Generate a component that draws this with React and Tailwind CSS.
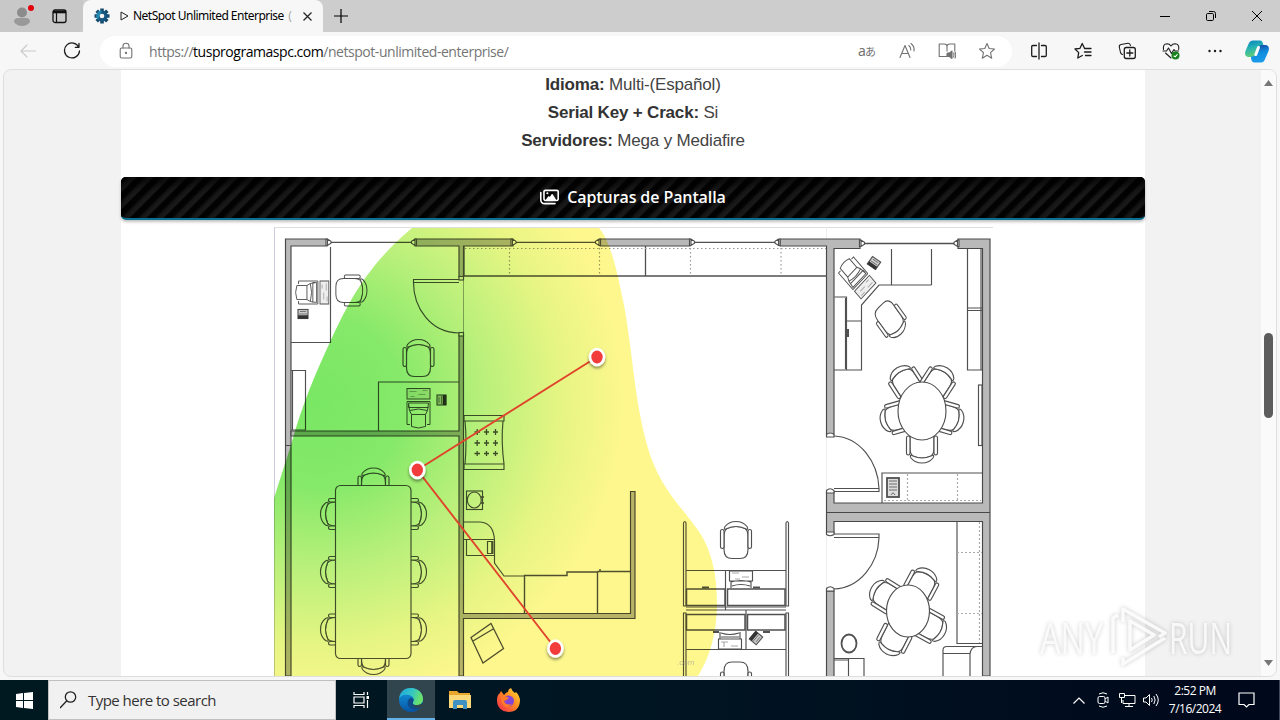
import { FaRegImages } from 'react-icons/fa6'

const UI_FONT = "font-['Open_Sans','Noto_Sans',sans-serif]"

// Office chair, backrest pointing up at rot=0
function Chair({ x, y, rot = 0, sx = 1 }) {
  return (
    <g transform={`translate(${x} ${y}) scale(${sx} 1) rotate(${rot})`} fill="#fff">
      <path d="M-9-12Q-12-10-12-4V9Q-12 18-4 18H4Q12 18 12 9V-4Q12-10 9-12Q0-16-9-12Z" />
      <path d="M-11-14Q-7-19 0-19Q7-19 11-14Q13-10 9-12Q0-16-9-12Q-13-10-11-14Z" />
      <rect x="-15.5" y="-11" width="3.5" height="19" rx="1.7" />
      <rect x="12" y="-11" width="3.5" height="19" rx="1.7" />
    </g>
  )
}

function Laptop({ x, y, rot = 0, sx = 1 }) {
  return (
    <g transform={`translate(${x} ${y}) scale(${sx} 1) rotate(${rot})`} fill="none" strokeWidth="1">
      <rect x="-11.5" y="-20" width="23" height="10.5" fill="#eee" />
      <path d="M-9-17H-2M0-14H7M4-18H9M-8-12H-4" stroke="#aaa" />
      <path d="M-11.5-7H11.5V16H8.5M-11.5-7V16H-8.5" />
      <path d="M-10-5.5H10L9 2Q0-1-9 2ZM-9 2L-7 6V18Q0 21 7 18V6L9 2M-7 6H7M-10-4V-1H10" />
    </g>
  )
}

function Phone({ x, y, rot = 0 }) {
  return (
    <g transform={`translate(${x} ${y}) rotate(${rot})`}>
      <rect x="-5" y="-4.5" width="10" height="9" fill="#ccc" />
      <path d="M-5 3H5" strokeWidth="3.5" stroke="#333" />
      <path d="M-4 0H4M-3-2.5H3" strokeWidth="0.7" />
    </g>
  )
}

function WindowEnd({ x, y = 242.3, flip }) {
  return (
    <path
      transform={`translate(${x} ${y}) scale(${flip ? -1 : 1} 1)`}
      d="M-2.5-3.2H-1L2.5-1V1L-1 3.2H-2.500ZM-1-3V3"
      fill="#fff"
    />
  )
}

const PINS = [[597, 357], [417.3, 470], [555.4, 648.5]]

function FloorPlan() {
  return (
    <svg width="719" height="449" viewBox="274 227 719 449" className="block isolate">
      <defs>
        <radialGradient id="heat" gradientUnits="userSpaceOnUse" cx="318" cy="402" r="305">
          <stop offset="0" stopColor="#79e764" />
          <stop offset="0.28" stopColor="#86e969" />
          <stop offset="0.55" stopColor="#baf07b" />
          <stop offset="0.8" stopColor="#e6f583" />
          <stop offset="1" stopColor="#fdf78e" />
        </radialGradient>
        <filter id="pinShadow" x="-50%" y="-50%" width="200%" height="200%">
          <feDropShadow dx="0" dy="2" stdDeviation="1.8" floodOpacity="0.45" />
        </filter>
      </defs>
      <rect x="274" y="227" width="719" height="449" fill="#fff" />
      <path d="M274 227.5H993" stroke="#dedede" />
      <path d="M274.5 227V676" stroke="#ccd" />
      <path d="M826.5 227V676" stroke="#eee" />

      <g stroke="#505050" strokeWidth="1.15" fill="none">
        {/* walls */}
        <g fill="#b9b9b9" stroke="#484848">
          <path d="M285.5 239H327V246H291V676H285.5Z" />
          <path d="M415 239H513V246H463.5V277H459V246H415Z" />
          <path d="M600 239H690V246H600ZM780 239H860V248.5H834V434H826.5V246H780Z" />
          <path d="M958 239H990V676H982.5V521.5H834V533H826.5V492H834V503H982.5V248.5H958Z" />
          <path d="M826.5 512.5H990M285.5 445.5H291" />
          <path d="M459 335H463.5V613.5H630.5V491.5H635V618.5H463.5V676H459V436H291V431H459Z" />
          <rect x="826.5" y="591" width="7.5" height="86" />
        </g>
        <g fill="#fff">
          <rect x="459" y="276.5" width="4.5" height="3.5" />
          <rect x="459" y="332.5" width="4.5" height="3.5" />
          <path d="M826.5 437V434.5Q830 431.5 834 434.5V437ZM826.5 493V490.5Q830 487 834 490.5V493ZM826.5 532V534.5Q830 537 834 534.5V532ZM826.5 591V588.5Q830 585 834 588.5V591Z" />
        </g>

        {/* windows */}
        <path d="M329 242.3H414M515 242.3H598M692 242.3H778M862 243.5H957" strokeWidth="1.3" />
        <WindowEnd x={328.5} /><WindowEnd x={414} flip />
        <WindowEnd x={513.5} /><WindowEnd x={598} flip />
        <WindowEnd x={692} /><WindowEnd x={777.5} flip />
        <WindowEnd x={862} y={243.3} /><WindowEnd x={956.5} y={243.3} flip />

        {/* doors */}
        <path d="M459 279.5H413.5V282.5H459M413.5 282.5C413.5 307 430 333 459 333" />
        <path d="M463.5 280V332" strokeWidth="0.5" />
        <path d="M834 488.5H879V491.5H834M879 488.5C878 462 860 437 834 436" />
        <path d="M834 534H879V537.5H834M879 538C878 564 860 588 834 589" />

        {/* top left office */}
        <path d="M330.5 247V342.5H291M291 370.5H305.5V430H291M292.5 370V430" />
        <path d="M378.5 431V382H459" />
        <Laptop x={312} y={292.5} rot={90} sx={0.84} />
        <Phone x={303} y={314} />
        <Chair x={351} y={290.5} rot={90} sx={0.84} />
        <Chair x={418.5} y={358.5} />
        <Laptop x={418.5} y={408.5} />
        <Phone x={441.5} y={400} rot={-90} />

        {/* counter along the top */}
        <path d="M463.5 276H826.5M645.5 246V276M464 246V276" strokeWidth="1.3" />
        <path d="M465 248.5H826M509.5 248V276M599.5 248V276M690.5 248V276M781 248V276" stroke="#999" strokeDasharray="1.5 2.5" />

        {/* meeting table */}
        <Chair x={373.5} y={487} />
        <Chair x={373.5} y={655.5} rot={180} />
        {[514, 572, 629.5].map(y => (
          <g key={y}>
            <Chair x={339.5} y={y} rot={-90} />
            <Chair x={407.5} y={y} rot={90} />
          </g>
        ))}
        <rect x="335.5" y="485.5" width="75.5" height="173" rx="5" fill="#fff" />

        {/* lounge and kitchen */}
        <path d="M464 415.5H504V421H464ZM464 464H504V469.5H464ZM465 421Q467 442 465 464M503 421Q501 442 504 464" />
        <path d="M474.5 432H480M484 432H489M493 432H498M474.5 443H480M484 443H489M493 443H498M474.5 453.5H480M484 453.5H489M493 453.5H498M477.2 429V435M486.5 429V435M495.5 429V435M477.2 440V446M486.5 440V446M495.5 440V446M477.2 451V456M486.5 451V456M495.5 451V456" strokeWidth="1.3" />
        <rect x="466.5" y="491" width="16" height="18.5" />
        <ellipse cx="474.3" cy="500" rx="7" ry="8" />
        <path d="M482.5 496V498M482.5 502V504" strokeWidth="2.5" />
        <path d="M464 522H480Q494 523 494.5 541V563L504 576H524M464 539.5H494M466.5 539.5V555.5H494M487.5 541.5H492V553.5H487.5Z" />
        <path d="M492.5 541V554" strokeWidth="2" />
        <path d="M524.5 613V575.5H567V572H597.5V613M597.5 571.5H630M600 569V571" strokeWidth="1.4" />
        <path d="M471 637.5L491 623.5L503.5 648.5L483 663ZM473 641L494 628.5" strokeWidth="1.3" />

        {/* cubicles */}
        <path d="M683.5 606V523Q684.8 520 686 523V606ZM786 606V523Q787.2 520 788.5 523V606ZM683.5 676V613H686V676M786 676V613H788.5V676" />
        <path d="M686 570.5H786M725.5 570V610M686 607H786M686 610H786M746 610V650M686 649.5H786" />
        <path d="M686.5 589H725V605.5H686.5ZM727.5 589H785V605.5H727.5ZM686.5 614.5H745V630H686.5ZM747.5 614.5H785V630H747.5Z" strokeWidth="1.5" />
        <path d="M702 587.5H709M753 587.5H760M713 632H719M763 632H770" strokeWidth="2" />
        <path d="M729.5 571H752.5V581H729.5ZM731 581V588M751 581V588M731 582Q741 579 751 582M732 586Q741 583 750 586M718.5 639H741.5V649H718.5ZM720 632V639M740 632V639M721 633Q730 636 739 633M721 637H739" />
        <path d="M732 573H739M742 577H749M735 579H740M721 642H728M731 646H738M724 647V642" stroke="#aaa" />
        <Phone x={756} y={638} rot={130} />
        <Chair x={736} y={540.5} />
        <Chair x={736} y={680} rot={180} />

        {/* top right office */}
        <path d="M891.5 249V285M931.5 249V285M931.5 285H879L861.5 305V370H834M846.5 321H861.5M834.5 297H846.5V370M845.5 298V369" />
        <path d="M848 329V337" strokeWidth="2" />
        <path d="M967.5 248.5V370H982M967.5 308H982M967.5 310.5H982M981 249V370" strokeWidth="1.2" />
        <rect x="978.5" y="385" width="3.5" height="60.5" />
        <Laptop x={856} y={276.5} rot={136} sx={0.9} />
        <Phone x={874} y={263} rot={35} />
        <Chair x={890.5} y={319.5} rot={140} sx={0.86} />
        <Chair x={922} y={444} rot={180} />
        <Chair x={945} y={417} rot={106} />
        <Chair x={899} y={417} rot={-106} />
        <Chair x={907} y={384} rot={-33} />
        <Chair x={937} y={384} rot={33} />
        <ellipse cx="922" cy="411" rx="24" ry="29" fill="#fff" />
        <path d="M882 503V473H982" />
        <path d="M907.5 474V502M957.5 474V502M884 500.5H981" stroke="#aaa" strokeDasharray="2 2" />
        <rect x="887" y="478" width="12" height="19" fill="#ddd" strokeWidth="1.8" />
        <path d="M889 481H897M889 484H897M889 487H897M889 490H897M891 495Q893 491 895 495" strokeWidth="0.8" />

        {/* bottom right office */}
        <Chair x={920.5} y={586.5} rot={28} />
        <Chair x={928} y={625} rot={119} />
        <Chair x={895} y={637} rot={207} />
        <Chair x={888} y={597} rot={-58} />
        <ellipse cx="908" cy="611" rx="21.5" ry="26" fill="#fff" />
        <path d="M957 522V643.5H982" />
        <path d="M957 552.5H982M957 613.5H982M979.5 522V643" stroke="#aaa" strokeDasharray="2 2" />
        <ellipse cx="849" cy="643.5" rx="7.5" ry="9" strokeWidth="1.8" />
        <path d="M834 658.5H864V676M848.5 658V676M834 660H848" />
        <path d="M943 676V650Q943 646.5 947 646.5H982M943 653.5H970M970 676V654Q971 646.5 977 646.5" />
      </g>

      <path
        d="M274 498L291 445C302 405 316 372 330 342C346 308 364 268 412 228H599C612 242 619 282 624 305C633 355 634 395 646 441C658 488 681 505 700 533C712 552 717 575 717 604C717 632 710 657 698 676H274Z"
        fill="url(#heat)"
        className="mix-blend-multiply"
      />
      <text x="677" y="665" fontSize="8" fill="#999" opacity=".6" fontFamily="Liberation Sans">.com</text>

      <path d="M597 357L417.3 470L555.4 648.5" fill="none" stroke="#e0442c" strokeWidth="1.9" />
      {PINS.map(([x, y]) => (
        <g key={x}>
          <ellipse cx={x} cy={y} rx="8.3" ry="9.3" fill="#fff" filter="url(#pinShadow)" />
          <ellipse cx={x} cy={y} rx="5.7" ry="6.5" fill="#f23c3c" />
        </g>
      ))}
    </svg>
  )
}

function Icon({ size = 18, children, className = '' }) {
  return (
    <svg width={size} height={size} viewBox="0 0 18 18" fill="none" stroke="currentColor" strokeWidth="1.1" strokeLinecap="round" strokeLinejoin="round" className={`block shrink-0 ${className}`}>
      {children}
    </svg>
  )
}

const STAR = 'M9 1.5L11.2 6.5L16.5 7L12.5 10.7L13.7 16.2L9 13.3L4.3 16.2L5.5 10.7L1.5 7L6.8 6.5Z'

function TitleBar() {
  return (
    <div className="flex h-8 shrink-0 bg-[#cdcdcd]">
      <div className="flex w-[83px] shrink-0 items-center rounded-br-md bg-[#c8c8c8] pl-3">
        <svg width="22" height="22" viewBox="0 0 22 22">
          <circle cx="10" cy="7.5" r="5" fill="#8c8c8c" />
          <path d="M2 17Q2 13 6 13H14Q18 13 18 17Q15 21 10 21Q5 21 2 17Z" fill="#999" />
          <circle cx="19" cy="3" r="3" fill="#e8000b" />
        </svg>
        <svg width="15" height="15" viewBox="0 0 15 15" fill="none" stroke="#111" className="ml-[18px]">
          <rect x="1" y="1" width="13" height="12.5" rx="2" strokeWidth="1.3" />
          <path d="M1 3H14" strokeWidth="2.6" />
          <path d="M4.5 4V13" strokeWidth="1.2" />
        </svg>
      </div>
      <div className="flex w-60 shrink-0 items-center rounded-t-lg bg-[#f7f7f7] pl-[11px]">
        <svg width="16" height="16" viewBox="0 0 16 16" className="shrink-0">
          <path d="M8 .5V15.5M.5 8H15.5M2.7 2.7L13.3 13.3M13.3 2.7L2.7 13.3" stroke="#164a6c" strokeWidth="3.6" />
          <circle cx="8" cy="8" r="5.5" fill="#17567e" />
          <path d="M8 2.5A5.5 5.5 0 0 0 4 12Z" fill="#2588af" />
          <circle cx="8" cy="8" r="2.3" fill="#f7f7f7" />
        </svg>
        <svg width="9" height="10" viewBox="0 0 9 10" fill="none" stroke="#222" className="ml-[10px] shrink-0">
          <path d="M1 1L8 5L1 9Z" />
        </svg>
        <div className="ml-[4px] w-[161px] whitespace-nowrap font-['Noto_Sans',sans-serif] text-[12px] leading-4 tracking-[-0.52px] text-black">
          NetSpot Unlimited Enterprise <span className="ml-0.5 text-[#aaa]">(</span>
        </div>
        <svg width="9" height="9" viewBox="0 0 9 9" stroke="#222" strokeWidth="1.2" className="ml-[9px] shrink-0">
          <path d="M.5.5L8.5 8.5M8.5.5L.5 8.5" />
        </svg>
      </div>
      <div className="flex grow items-center rounded-bl-md bg-[#cdcdcd] pl-[11px] text-black">
        <svg width="14" height="14" viewBox="0 0 14 14" stroke="currentColor" strokeWidth="1.2">
          <path d="M7 0V14M0 7H14" />
        </svg>
        <div className="ml-auto flex items-center pr-[18px]">
          <svg width="10" height="10" viewBox="0 0 10 10" stroke="currentColor"><path d="M0 5.5H10" /></svg>
          <svg width="10" height="10" viewBox="0 0 10 10" fill="none" stroke="currentColor" className="ml-9">
            <rect x=".5" y="2.5" width="7" height="7" rx="1.2" />
            <path d="M3 .5H7.5Q9.5.5 9.5 2.5V7" />
          </svg>
          <svg width="10" height="10" viewBox="0 0 10 10" stroke="currentColor" className="ml-9"><path d="M0 0L10 10M10 0L0 10" /></svg>
        </div>
      </div>
    </div>
  )
}

function Toolbar() {
  return (
    <div className="flex h-[37px] shrink-0 items-center bg-[#f7f7f7] pl-[19px] pt-px text-[#1c1c1c]">
      <Icon className="text-[#c9c9c9]"><path d="M8 3L2 9L8 15M2 9H16.5" /></Icon>
      <Icon className="ml-[26px]"><path d="M15.8 5.2A7.500 7.500 0 1 0 16.500 9M16 1.5V5.3H12.300" strokeWidth="1.3" /></Icon>
      <div className="ml-[19px] flex h-[31px] w-[912px] items-center rounded-full bg-white pl-[17px] text-[#727272]">
        <Icon>
          <rect x="3.2" y="6" width="11.6" height="10" rx="1.5" />
          <path d="M6 6V4Q6 1.2 9 1.2Q12 1.2 12 4V6" />
          <circle cx="9" cy="11" r=".6" fill="currentColor" />
        </Icon>
        <div className="ml-[14px] w-[364px] whitespace-nowrap text-[14px] tracking-[-0.46px] text-[#757575]">
          https://<span className="text-black">tusprogramaspc.com</span>/netspot-unlimited-enterprise/
        </div>
        <div className="ml-auto flex items-center gap-[22px] pr-4">
          <span className="w-[18px] whitespace-nowrap font-['Noto_Sans','Noto_Sans_CJK_JP',sans-serif] text-[11px] leading-4 tracking-[-0.8px]"><span className="text-[14px]">a</span>あ</span>
          <Icon>
            <path d="M2 15.5L7 3.5L12 15.5M3.7 11.5H10.3M10.8 3.5Q13 5 12.8 8M13 1.5Q16.8 4.500 16 9" />
          </Icon>
          <Icon>
            <path d="M8.5 14.5H1.2V2H6Q9 2 9 4.5Q9 2 12 2H16.8V9M9 4.5V9M9 11.5V14" />
            <path d="M9.5 11H11.5L14 9V16.5L11.5 14.5H9.5Z" fill="currentColor" />
            <path d="M15.5 11Q16.5 13 15.5 15M17 10Q18.5 13 17 16" />
          </Icon>
          <Icon><path d={STAR} /></Icon>
        </div>
      </div>
      <div className="ml-[18px] flex items-center gap-[26px]">
        <Icon><path d="M9 1V17M6.5 3.5H3Q1.7 3.5 1.7 4.8V13.2Q1.7 14.5 3 14.5H6.5M11.5 3.5H15Q16.3 3.5 16.3 4.8V13.2Q16.3 14.5 15 14.5H11.5" strokeWidth="1.3" /></Icon>
        <Icon><path d="M10.5 6.3L8.2 1.5L6 6.3L1 7L4.7 10.6L3.8 16L8.3 13.5M10.5 6.5H17M10.5 10H17M11.5 13.5H17" strokeWidth="1.3" /></Icon>
        <Icon>
          <path d="M4.5 12.5Q3 12 2.5 10.5L1.3 5Q1 3 3 2.5L10 1.2Q12 1 12.5 3.5" />
          <rect x="6.3" y="5.5" width="11" height="11" rx="2" strokeWidth="1.3" />
          <path d="M11.8 8V14M8.8 11H14.8" strokeWidth="1.3" />
        </Icon>
        <Icon>
          <path d="M1.5 7.5Q.7 2 5 1.8Q7.5 1.8 9 4Q10.5 1.8 13 1.8Q17.5 2 16.7 7.5M3.5 11L9 16M1 9H4.5L6.5 6L9.5 11.5L12 7.5L13 9H16.5" />
          <circle cx="13.5" cy="13.5" r="4" fill="#18831d" stroke="none" />
          <path d="M12 14L13.2 14.8L15.2 12.5" stroke="#fff" />
        </Icon>
        <Icon><g fill="currentColor" stroke="none"><circle cx="3.5" cy="9" r="1.2" /><circle cx="9" cy="9" r="1.2" /><circle cx="14.5" cy="9" r="1.2" /></g></Icon>
      </div>
      <svg width="24" height="23" viewBox="0 0 24 23" className="ml-[21px]">
        <defs>
          <linearGradient id="cpA" x2=".3" y2="1"><stop stopColor="#087fc2" /><stop offset=".5" stopColor="#25b3b4" /><stop offset="1" stopColor="#64ce75" /></linearGradient>
          <linearGradient id="cpB" x2=".2" y2="1"><stop stopColor="#163c9a" /><stop offset=".5" stopColor="#118cdc" /><stop offset="1" stopColor="#1a9bea" /></linearGradient>
        </defs>
        <path d="M8 .5H15Q18 .5 18.5 6Q14 5 13 9L11 14Q10 17 7 17H3Q-1 16 .5 11L3.500 4Q4.800 .5 8 .5Z" fill="url(#cpA)" />
        <path d="M16 22.500H9Q6 22 6 16.500Q10 17 11 13L13 8Q14 5 17 5H21Q25 6 23.500 11L20.500 18Q19 22.500 16 22.500Z" fill="url(#cpB)" />
        <path d="M13.500 7.500L10.800 14.500" stroke="#fff" strokeWidth="3" strokeLinecap="round" />
      </svg>
    </div>
  )
}

function Watermark() {
  return (
    <svg width="216" height="68" viewBox="0 0 216 68" className="pointer-events-none absolute bottom-1 right-[25px] drop-shadow-[0_0_2px_rgba(0,0,0,0.25)]">
      <g fontFamily="'Open Sans', sans-serif" fontSize="43" fill="#fff" fillOpacity=".8">
        <text x="5" y="50" textLength="63" lengthAdjust="spacingAndGlyphs">ANY</text>
        <text x="134" y="50" textLength="63" lengthAdjust="spacingAndGlyphs">RUN</text>
      </g>
      <g fill="none" stroke="#fff" strokeOpacity=".85" strokeWidth="3.5" strokeLinejoin="round">
        <path d="M88 18V5L130 29L124 33M88 54V60L130 34" />
        <path d="M95 17V46L119 31Z" />
        <path d="M78 49V14L83 11" />
      </g>
    </svg>
  )
}

function PageView() {
  return (
    <div className="relative mx-[3px] flex h-[608px] shrink-0 overflow-hidden rounded-lg border border-[#dedede] bg-[#f2f2f2]">
      <div className="ml-[117px] flex w-[1024px] shrink-0 flex-col items-center bg-white">
        <div className="h-[107px] w-full pt-px text-center font-['Liberation_Sans',Arial,sans-serif] text-[17px] leading-7 tracking-[-0.18px] text-[#444]">
          <p><b className="text-[#333]">Idioma:</b> Multi-(Español)</p>
          <p><b className="text-[#333]">Serial Key + Crack:</b> Si</p>
          <p><b className="text-[#333]">Servidores:</b> Mega y Mediafire</p>
        </div>
        <div className="flex h-[43px] w-full shrink-0 items-center justify-center rounded-[5px] border-b-2 border-[#087192] bg-[#080808] bg-[repeating-linear-gradient(135deg,#020202_0,#020202_4px,#161616_7px,#1a1a1a_10px,#020202_12px)] pb-px text-white shadow-[0_2px_3px_rgba(0,0,0,0.25),inset_0_8px_8px_rgba(0,0,0,0.5)]">
          <FaRegImages className="mr-2 h-[18px] w-[19px]" />
          <span className="text-[16px] font-semibold tracking-[-0.1px]">Capturas de Pantalla</span>
        </div>
        <div className="mt-[7px] w-[719px]"><FloorPlan /></div>
      </div>
      <div className="ml-auto flex w-[15px] flex-col items-center bg-[#fafafa] py-[10px]">
        <svg width="9" height="6" viewBox="0 0 9 6"><path d="M4.5 0L9 6H0Z" fill="#777" /></svg>
        <div className="mt-[247px] h-[85px] w-[9px] rounded-full bg-[#5c5c5c]" />
        <svg width="9" height="6" viewBox="0 0 9 6" className="mt-auto"><path d="M0 0H9L4.5 6Z" fill="#777" /></svg>
      </div>
      <Watermark />
    </div>
  )
}

function Taskbar() {
  return (
    <div className="mt-auto flex h-10 shrink-0 items-center bg-linear-to-r from-[#001820] via-[#001522] to-[#00081b] text-white">
      <div className="flex w-12 justify-center">
        <svg width="17" height="17" viewBox="0 0 17 17" fill="#fff">
          <path d="M0 2L7 1V8H0ZM8 .9L17 0V8H8ZM0 9H7V16L0 15ZM8 9H17V17L8 16Z" />
        </svg>
      </div>
      <div className="flex h-full w-72 items-center border border-[#c0c0c0] bg-[#f1f1f1] pl-[11px]">
        <svg width="17" height="18" viewBox="0 0 17 18" fill="none" stroke="#222" strokeWidth="1.3">
          <circle cx="10.5" cy="6" r="5.2" /><path d="M6.8 9.8L0 17" />
        </svg>
        <span className="ml-[11px] text-[15px] tracking-[-0.53px] text-[#333]">Type here to search</span>
      </div>
      <div className="flex w-[50px] justify-center">
        <svg width="17" height="16" viewBox="0 0 17 16" fill="none" stroke="#fff" strokeWidth="1.2">
          <path d="M1 0V2.5H11V0M1 16V13.5H11V16M1 5H11V11H1ZM14.5 0V3M14.5 8V16" />
          <rect x="13.5" y="4" width="2.5" height="3" fill="#fff" stroke="none" />
        </svg>
      </div>
      <div className="ml-px flex h-full w-12 items-center justify-center border-b-2 border-[#65b2e8] bg-[#31454e] pt-0.5">
        <svg width="24" height="24" viewBox="0 0 24 24">
          <defs>
            <linearGradient id="edgeTop" y2=".3"><stop stopColor="#20a4de" /><stop offset=".55" stopColor="#32c5c5" /><stop offset="1" stopColor="#6be16d" /></linearGradient>
            <linearGradient id="edgeLow" x2="0" y2="1"><stop stopColor="#149bdf" /><stop offset="1" stopColor="#0755a5" /></linearGradient>
          </defs>
          <circle cx="12" cy="12" r="12" fill="url(#edgeLow)" />
          <path d="M0 11C1 3 6 0 12 0C19 0 24 5 24 11C24 15 21 17 18 17C14 17 13 15 14 14C16 11 14 8 10 7C5 6 1 8 0 11Z" fill="url(#edgeTop)" />
          <path d="M14 14C13 18 18 20 23 17C20 23 13 23 10 19C7 15 9 9 13 10C15 11 15 12 14 14Z" fill="#104a88" />
          <path d="M14 14C12 17 17 19 24 15V18L22 19C17 21 12 18 14 14Z" fill="#31454e" />
        </svg>
      </div>
      <div className="flex w-[50px] justify-center">
        <svg width="22" height="20" viewBox="0 0 22 20">
          <path d="M0 1H8L10 3H21V18H0Z" fill="#e9a72c" />
          <path d="M0 5H22V18H0Z" fill="#fbd878" />
          <path d="M4 19V12Q4 10 6 10H16Q18 10 18 12V19H14V15H8V19Z" fill="#3f91c4" />
        </svg>
      </div>
      <div className="flex w-[46px] justify-center">
        <svg width="23" height="24" viewBox="0 0 23 24">
          <defs><linearGradient id="fox" x1="1" x2="0" y2="1"><stop stopColor="#ffe33b" /><stop offset=".45" stopColor="#ff8a20" /><stop offset="1" stopColor="#f22355" /></linearGradient></defs>
          <path d="M4 3L7 7Q9 4 11 4Q11 1 14 0Q15 3 18 5L19 4Q23 8 23 13Q22 24 11.5 24Q0 23 0 12Q0 7 3 5Z" fill="url(#fox)" />
          <circle cx="11.5" cy="13" r="5.5" fill="#8146d8" />
          <path d="M4 9Q8 7 12 10Q9 13 7 13Q9 18 15 16Q11 21 7 18Q4 15 4 9Z" fill="#ff7a29" />
        </svg>
      </div>
      <div className="ml-auto flex items-center">
        <svg width="12" height="7" viewBox="0 0 12 7" fill="none" stroke="#fff" strokeWidth="1.2"><path d="M.5 6.5L6 1L11.5 6.5" /></svg>
        <svg width="12" height="16" viewBox="0 0 12 16" fill="none" stroke="#fff" className="ml-[12px]">
          <rect x="1" y="4.5" width="7" height="7" rx="1.5" /><path d="M8 7L11 5V11L8 9M2 2Q6-.5 10 2M2 14Q6 16.5 10 14" />
        </svg>
        <svg width="17" height="15" viewBox="0 0 17 15" fill="none" stroke="#fff" className="ml-[10px]">
          <path d="M6 2.5H16V10.5H4V7M10 10.5V13.5M6 13.5H14M.5.5H5.5V4.5H.5ZM2.5 4.5V10" />
        </svg>
        <svg width="17" height="14" viewBox="0 0 17 14" fill="none" stroke="#fff" className="ml-[7px]">
          <path d="M.5 5H3L6.5 1.5V12.5L3 9H.5ZM8.5 5Q10 7 8.5 9M10.8 3Q13.5 7 10.8 11M13 1Q17.5 7 13 13" />
        </svg>
        <div className="ml-[7px] w-[56px] whitespace-nowrap text-center text-[12px] leading-[18px] tracking-[-0.5px]">
          <div>2:52 PM</div>
          <div>7/16/2024</div>
        </div>
        <svg width="17" height="16" viewBox="0 0 17 16" fill="none" stroke="#fff" strokeWidth="1.2" className="ml-[15px] mr-6">
          <path d="M1 1H16V12.5H11L8.5 15L6 12.5H1Z" />
        </svg>
      </div>
      <div className="h-full w-px bg-[#3f4959]" />
    </div>
  )
}

export default function App() {
  return (
    <div className={`flex h-[720px] w-[1280px] flex-col overflow-hidden bg-[#f7f7f7] ${UI_FONT}`}>
      <TitleBar />
      <Toolbar />
      <PageView />
      <Taskbar />
    </div>
  )
}
